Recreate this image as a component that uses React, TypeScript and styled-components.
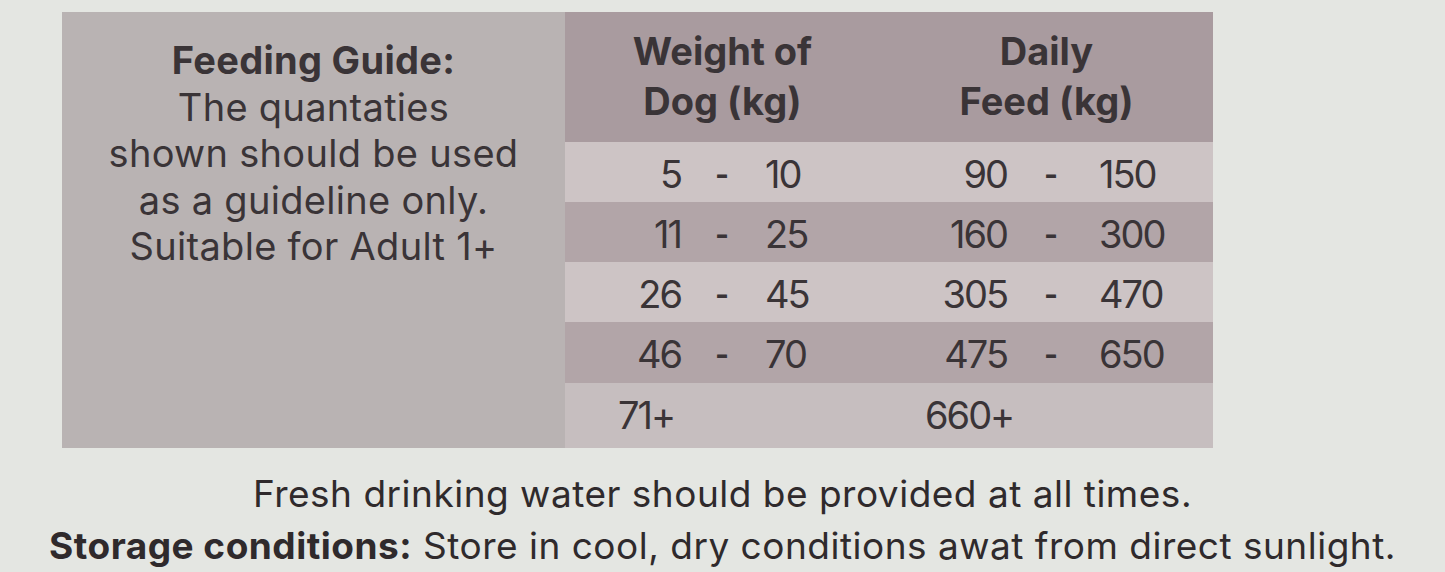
import React from "react";
import styled, { createGlobalStyle } from "styled-components";

const Global = createGlobalStyle`
  html, body { margin: 0; padding: 0; background: #e4e6e2; }
  body { font-family: Inter, "Noto Sans", sans-serif; color: #3a3437; }
`;

const Page = styled.div`
  width: 1445px;
  height: 572px;
  overflow: hidden;
  background: #e4e6e2;
  padding-top: 12px;
  box-sizing: border-box;
`;

const Table = styled.div`
  margin-left: 62px;
  width: 1151px;
  display: grid;
  grid-template-columns: 503px 315px 333px;
  grid-template-rows: 130px 60px 60px 60px 61px 65px;
`;

const GuideCell = styled.div`
  grid-row: 1 / span 6;
  grid-column: 1;
  background: #b9b3b3;
  display: flex;
  flex-direction: column;
  align-items: center;
  padding-top: 25px;
  font-size: 38px;
  letter-spacing: 0.3px;
`;

const Line = styled.div<{ $h: number; $bold?: boolean }>`
  height: ${(p) => p.$h}px;
  line-height: ${(p) => p.$h}px;
  white-space: nowrap;
  ${(p) => (p.$bold ? "font-weight: 700;" : "")}
`;

const Bold = styled.span`
  font-weight: 700;
`;

const HeadCell = styled.div`
  background: #a99b9f;
  display: flex;
  flex-direction: column;
  align-items: center;
  justify-content: center;
  font-weight: 700;
  font-size: 38px;
  letter-spacing: 0px;
  padding-bottom: 2px;
`;

const Row = styled.div<{ $shade: "light" | "dark" | "last" }>`
  grid-column: 2 / span 2;
  display: grid;
  grid-template-columns: 315px 333px;
  padding-top: 3px;
  background: ${(p) =>
    p.$shade === "light" ? "#cdc4c5" : p.$shade === "dark" ? "#b2a5a8" : "#c6bebf"};
`;

const Range = styled.div<{ $left: number; $dash: number; $gap: number }>`
  display: grid;
  grid-template-columns: ${(p) => `${p.$left}px ${p.$dash}px 1fr`};
  align-items: center;
  font-size: 38px;
  letter-spacing: -2px;
  & > span:nth-child(1) { text-align: right; }
  & > span:nth-child(2) { text-align: center; font-size: 30px; font-weight: 700; }
  & > span:nth-child(3) { text-align: left; padding-left: ${(p) => p.$gap}px; }
`;

const Single = styled.div<{ $pad: number }>`
  display: flex;
  align-items: center;
  padding-left: ${(p) => p.$pad}px;
  font-size: 38px;
  letter-spacing: -2px;
  padding-bottom: 4px;
`;

const Notes = styled.div`
  margin-top: 20px;
  display: flex;
  flex-direction: column;
  align-items: center;
  font-size: 37px;
  letter-spacing: 0.5px;
  color: #2f2a2c;
`;

const rows: { w: [string, string]; f: [string, string]; shade: "light" | "dark" }[] = [
  { w: ["5", "10"], f: ["90", "150"], shade: "light" },
  { w: ["11", "25"], f: ["160", "300"], shade: "dark" },
  { w: ["26", "45"], f: ["305", "470"], shade: "light" },
  { w: ["46", "70"], f: ["475", "650"], shade: "dark" },
];

export default function App() {
  return (
    <Page>
      <Global />
      <Table>
        <GuideCell>
          <Line $h={46.5} $bold>Feeding Guide:</Line>
          <Line $h={46.5}>The quantaties</Line>
          <Line $h={46.5}>shown should be used</Line>
          <Line $h={46.5}>as a guideline only.</Line>
          <Line $h={46.5}>Suitable for Adult 1+</Line>
        </GuideCell>
        <HeadCell>
          <Line $h={50}>Weight of</Line>
          <Line $h={50}>Dog (kg)</Line>
        </HeadCell>
        <HeadCell>
          <Line $h={50}>Daily</Line>
          <Line $h={50}>Feed (kg)</Line>
        </HeadCell>
        {rows.map((r, i) => (
          <Row key={i} $shade={r.shade}>
            <Range $left={116} $dash={80} $gap={4}>
              <span>{r.w[0]}</span>
              <span>-</span>
              <span>{r.w[1]}</span>
            </Range>
            <Range $left={127} $dash={86} $gap={6}>
              <span>{r.f[0]}</span>
              <span>-</span>
              <span>{r.f[1]}</span>
            </Range>
          </Row>
        ))}
        <Row $shade="last">
          <Single $pad={53}>71+</Single>
          <Single $pad={45}>660+</Single>
        </Row>
      </Table>
      <Notes>
        <Line $h={52}>Fresh drinking water should be provided at all times.</Line>
        <Line $h={52}>
          <Bold>Storage conditions:</Bold> Store in cool, dry conditions awat from direct sunlight.
        </Line>
      </Notes>
    </Page>
  );
}
